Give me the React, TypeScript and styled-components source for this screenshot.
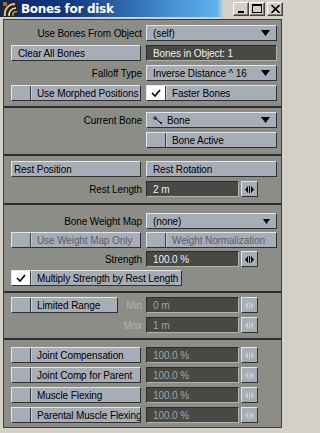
import React from "react"
import styled, { createGlobalStyle, css } from "styled-components"

const GlobalStyle = createGlobalStyle`
  html, body {
    margin: 0;
    padding: 0;
    background: #d4d0c8;
  }
  * {
    box-sizing: border-box;
  }
`

const FONT = `"Liberation Sans", Arial, sans-serif`

const Window = styled.div`
  width: 285px;
  height: 433px;
  background: #d4d0c8;
  display: flex;
  flex-direction: column;
  font-family: ${FONT};
  font-size: 10px;
  letter-spacing: -0.1px;
  color: #000;
`

const TitleBar = styled.div`
  height: 17px;
  display: flex;
  align-items: center;
  padding: 0 2px 0 2px;
  background: linear-gradient(
    90deg,
    #0a246a 0%,
    #143a80 25%,
    #3f84c8 55%,
    #5eb2ec 76%,
    #d4d0c8 78.5%
  );
`

const TitleText = styled.span`
  flex: 1;
  margin-left: 3px;
  color: #fff;
  font-weight: bold;
  font-family: "DejaVu Sans", ${FONT};
  font-size: 12px;
  letter-spacing: -0.3px;
`

const WinButtons = styled.div`
  display: flex;
  align-items: center;
`

const WinButton = styled.div<{ $gap?: boolean }>`
  width: 16px;
  height: 14px;
  margin-left: ${(p) => (p.$gap ? "2px" : "0")};
  background: #d4d0c8;
  border-top: 1px solid #fff;
  border-left: 1px solid #fff;
  border-right: 1px solid #404040;
  border-bottom: 1px solid #404040;
  box-shadow: inset -1px -1px 0 #808080;
  display: flex;
  align-items: center;
  justify-content: center;
`

const Panel = styled.div`
  flex: 1;
  margin: 2px 3px 5px 3px;
  background: #8d8d87;
  border: 1px solid #3e3e3c;
  display: flex;
  flex-direction: column;
`

const Section = styled.div<{ $first?: boolean; $pt: number; $pb: number; $gap?: number }>`
  display: flex;
  flex-direction: column;
  gap: ${(p) => p.$gap ?? 4}px;
  padding: ${(p) => p.$pt}px 4px ${(p) => p.$pb}px 7px;
  ${(p) =>
    !p.$first &&
    css`
      border-top: 2px solid #2c2c2a;
    `}
`

const Row = styled.div`
  display: grid;
  grid-template-columns: 130px 131px;
  column-gap: 5px;
  height: 16px;
`

const Label = styled.div<{ $disabled?: boolean }>`
  display: flex;
  align-items: center;
  justify-content: flex-end;
  margin-right: -1px;
  white-space: nowrap;
  flex: 1;
  color: ${(p) => (p.$disabled ? "#b2b2aa" : "#000")};
`

const raised = css`
  background: #a7adb6;
  border-top: 1px solid #e2e6ec;
  border-left: 1px solid #e2e6ec;
  border-right: 1px solid #2e3034;
  border-bottom: 1px solid #2e3034;
`

const Button = styled.div<{ $pad?: number }>`
  ${raised}
  display: flex;
  align-items: center;
  padding-left: ${(p) => p.$pad ?? 6}px;
  white-space: nowrap;
  overflow: hidden;
`

const CheckButton = styled.div<{ $width?: number; $disabled?: boolean }>`
  ${raised}
  display: flex;
  align-items: stretch;
  white-space: nowrap;
  overflow: hidden;
  color: ${(p) => (p.$disabled ? "#5a5e66" : "#000")};
  ${(p) => p.$width && `width: ${p.$width}px; flex: none;`}
`

const CheckBox = styled.div<{ $checked?: boolean }>`
  width: 19px;
  flex: none;
  border-right: 1px solid #3a3c40;
  background: ${(p) => (p.$checked ? "#fff" : "#a7adb6")};
  display: flex;
  align-items: center;
  justify-content: center;
`

const CheckLabel = styled.div`
  display: flex;
  align-items: center;
  padding-left: 5px;
  border-left: 1px solid #c8ccd2;
`

const Dropdown = styled.div`
  ${raised}
  display: flex;
  align-items: center;
  padding: 0 6px 0 6px;
  gap: 4px;
  white-space: nowrap;
`

const DropText = styled.span`
  flex: 1;
  overflow: hidden;
`

const DarkField = styled.div<{ $disabled?: boolean }>`
  flex: 1;
  background: #484846;
  border-top: 1px solid #2a2a28;
  border-left: 1px solid #2a2a28;
  border-right: 1px solid #b4b4ac;
  border-bottom: 1px solid #b4b4ac;
  color: ${(p) => (p.$disabled ? "#a4a4a0" : "#f0f0f0")};
  display: flex;
  align-items: center;
  padding-left: 6px;
  white-space: nowrap;
  overflow: hidden;
`

const FieldGroup = styled.div`
  display: flex;
  gap: 2px;
  padding-right: 19px;
`

const Spinner = styled.div`
  ${raised}
  width: 17px;
  flex: none;
  display: flex;
  align-items: center;
  justify-content: center;
`

const LeftGroup = styled.div`
  display: flex;
`

const TitleIcon = () => (
  <svg width="16" height="16" viewBox="0 0 16 16">
    <rect x="0" y="0" width="16" height="16" fill="#2a2418" />
    <path d="M3 15 A10 10 0 0 1 13 3" stroke="#d9c58a" strokeWidth="2" fill="none" />
    <path d="M7 15 A7 7 0 0 1 14 7" stroke="#f0e6c0" strokeWidth="1.5" fill="none" />
    <path d="M11 15 A3 3 0 0 1 15 11" stroke="#b89b5a" strokeWidth="1.5" fill="none" />
    <rect x="1" y="1" width="4" height="4" fill="#8a7448" />
  </svg>
)

const MinIcon = () => (
  <svg width="8" height="8" viewBox="0 0 8 8">
    <rect x="1" y="6" width="6" height="2" fill="#000" />
  </svg>
)

const MaxIcon = () => (
  <svg width="10" height="9" viewBox="0 0 10 9">
    <rect x="0.5" y="0.5" width="9" height="8" fill="none" stroke="#000" />
    <rect x="0" y="0" width="10" height="2" fill="#000" />
  </svg>
)

const CloseIcon = () => (
  <svg width="9" height="8" viewBox="0 0 9 8">
    <path d="M0.5 0 L8.5 8 M8.5 0 L0.5 8" stroke="#000" strokeWidth="1.6" />
  </svg>
)

const DownArrow = () => (
  <svg width="9" height="6" viewBox="0 0 9 6">
    <polygon points="0,0 9,0 4.5,6" fill="#000" />
  </svg>
)

const SmallDownArrow = () => (
  <svg width="7" height="5" viewBox="0 0 7 5">
    <polygon points="0,0 7,0 3.5,5" fill="#000" />
  </svg>
)

const Check = () => (
  <svg width="10" height="8" viewBox="0 0 10 8">
    <path d="M1 4 L4 7 L9 1" stroke="#000" strokeWidth="1.6" fill="none" />
  </svg>
)

const SpinIcon = ({ disabled }: { disabled?: boolean }) => {
  const c = disabled ? "#c9cdd3" : "#000"
  return (
    <svg width="9" height="7" viewBox="0 0 9 7">
      <polygon points="3,0 3,7 0,3.5" fill={c} />
      <rect x="4" y="0" width="1" height="7" fill={c} />
      <polygon points="6,0 6,7 9,3.5" fill={c} />
    </svg>
  )
}

const BoneIcon = () => (
  <svg width="10" height="9" viewBox="0 0 10 9">
    <path d="M2 2 L8 7" stroke="#000" strokeWidth="1" />
    <circle cx="2" cy="2" r="1.3" fill="none" stroke="#000" strokeWidth="0.8" />
    <circle cx="8.2" cy="7" r="0.9" fill="#000" />
  </svg>
)

const NumberField = ({
  value,
  disabled,
}: {
  value: string
  disabled?: boolean
}) => (
  <FieldGroup>
    <DarkField $disabled={disabled}>{value}</DarkField>
    <Spinner>
      <SpinIcon disabled={disabled} />
    </Spinner>
  </FieldGroup>
)

const CheckItem = ({
  label,
  checked,
  disabled,
  width,
}: {
  label: string
  checked?: boolean
  disabled?: boolean
  width?: number
}) => (
  <CheckButton $width={width} $disabled={disabled}>
    <CheckBox $checked={checked}>{checked && <Check />}</CheckBox>
    <CheckLabel>{label}</CheckLabel>
  </CheckButton>
)

const muscles = [
  "Joint Compensation",
  "Joint Comp for Parent",
  "Muscle Flexing",
  "Parental Muscle Flexing",
]

export default function App() {
  return (
    <>
      <GlobalStyle />
      <Window>
        <TitleBar>
          <TitleIcon />
          <TitleText>Bones for disk</TitleText>
          <WinButtons>
            <WinButton>
              <MinIcon />
            </WinButton>
            <WinButton>
              <MaxIcon />
            </WinButton>
            <WinButton $gap>
              <CloseIcon />
            </WinButton>
          </WinButtons>
        </TitleBar>
        <Panel>
          <Section $first $pt={5} $pb={5}>
            <Row>
              <Label>Use Bones From Object</Label>
              <Dropdown>
                <DropText>(self)</DropText>
                <DownArrow />
              </Dropdown>
            </Row>
            <Row>
              <Button>Clear All Bones</Button>
              <DarkField>Bones in Object: 1</DarkField>
            </Row>
            <Row>
              <Label>Falloff Type</Label>
              <Dropdown>
                <DropText>Inverse Distance ^ 16</DropText>
                <DownArrow />
              </Dropdown>
            </Row>
            <Row>
              <CheckItem label="Use Morphed Positions" />
              <CheckItem label="Faster Bones" checked />
            </Row>
          </Section>
          <Section $pt={4} $pb={6}>
            <Row>
              <Label>Current Bone</Label>
              <Dropdown>
                <BoneIcon />
                <DropText>Bone</DropText>
                <DownArrow />
              </Dropdown>
            </Row>
            <Row>
              <div />
              <CheckItem label="Bone Active" />
            </Row>
          </Section>
          <Section $pt={5} $pb={6}>
            <Row>
              <Button $pad={2}>Rest Position</Button>
              <Button>Rest Rotation</Button>
            </Row>
            <Row>
              <Label>Rest Length</Label>
              <NumberField value="2 m" />
            </Row>
          </Section>
          <Section $pt={8} $pb={5} $gap={3}>
            <Row>
              <Label>Bone Weight Map</Label>
              <Dropdown>
                <DropText>(none)</DropText>
                <SmallDownArrow />
              </Dropdown>
            </Row>
            <Row>
              <CheckItem label="Use Weight Map Only" disabled />
              <CheckItem label="Weight Normalization" disabled />
            </Row>
            <Row>
              <Label>Strength</Label>
              <NumberField value="100.0 %" />
            </Row>
            <Row>
              <LeftGroup>
                <CheckItem
                  label="Multiply Strength by Rest Length"
                  checked
                  width={171}
                />
              </LeftGroup>
            </Row>
          </Section>
          <Section $pt={4} $pb={5}>
            <Row>
              <LeftGroup>
                <CheckItem label="Limited Range" width={107} />
                <Label $disabled>Min</Label>
              </LeftGroup>
              <NumberField value="0 m" disabled />
            </Row>
            <Row>
              <Label $disabled>Max</Label>
              <NumberField value="1 m" disabled />
            </Row>
          </Section>
          <Section $pt={7} $pb={3}>
            {muscles.map((m) => (
              <Row key={m}>
                <CheckItem label={m} />
                <NumberField value="100.0 %" disabled />
              </Row>
            ))}
          </Section>
        </Panel>
      </Window>
    </>
  )
}
